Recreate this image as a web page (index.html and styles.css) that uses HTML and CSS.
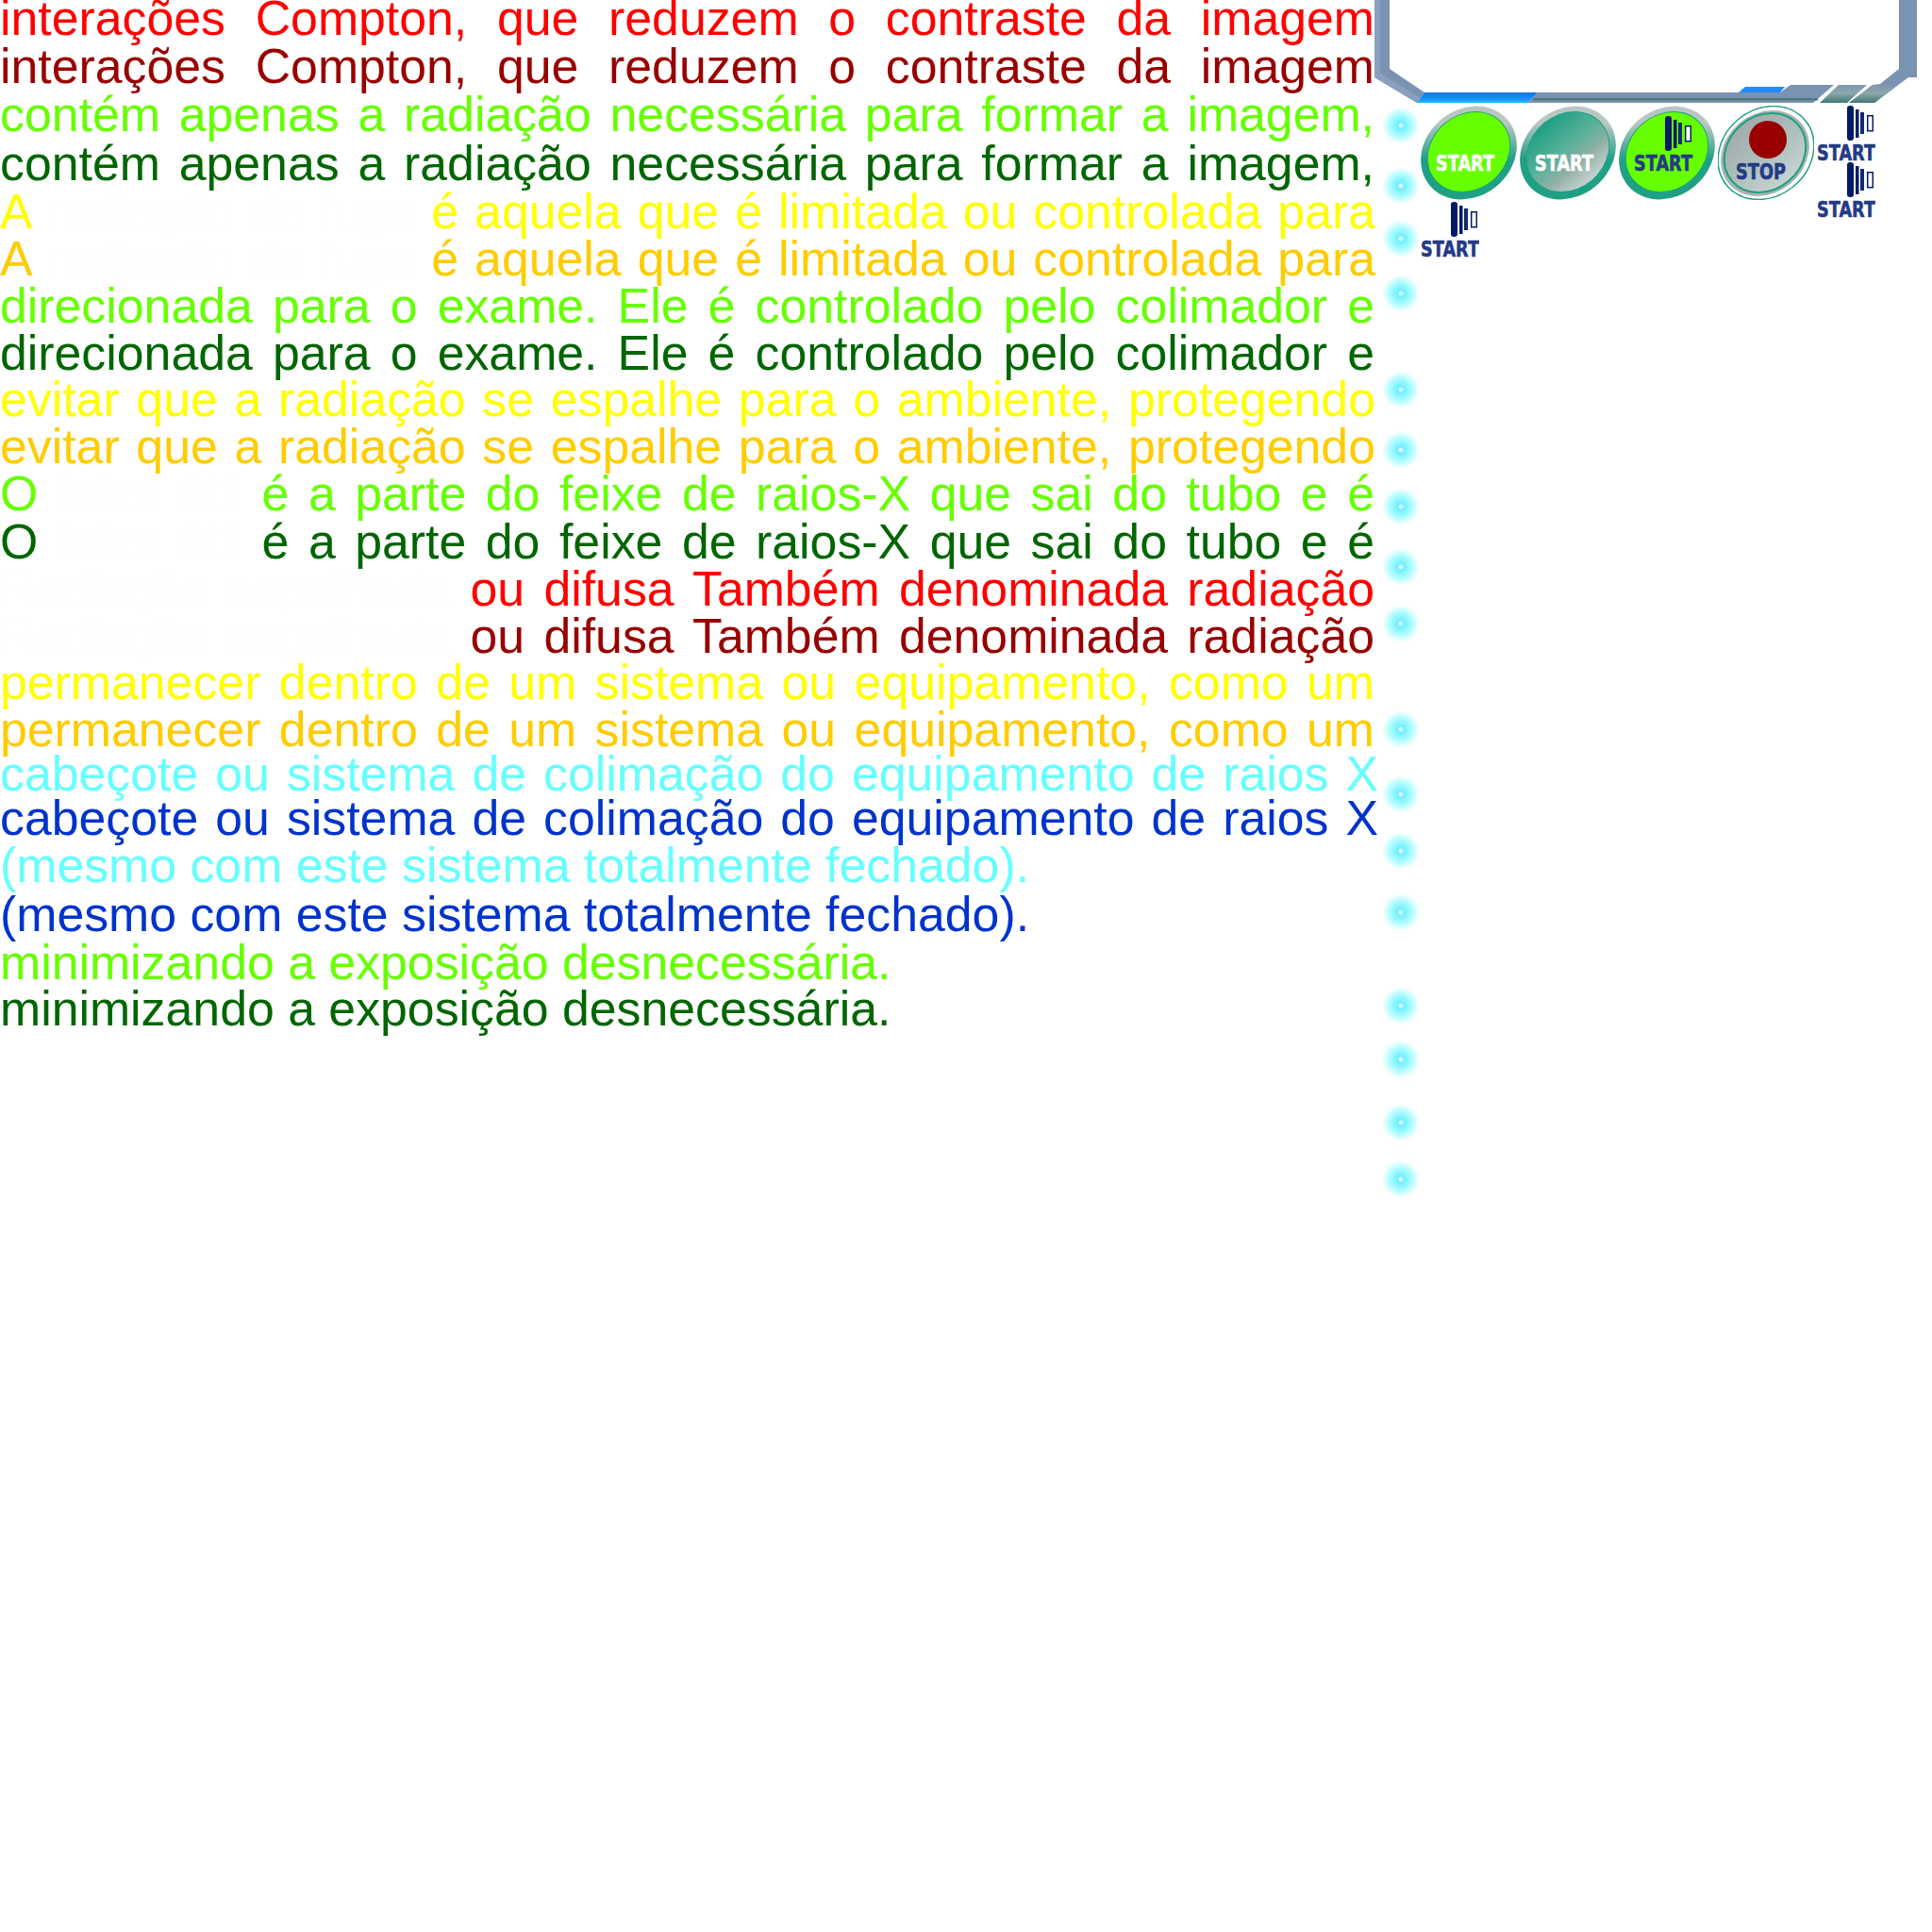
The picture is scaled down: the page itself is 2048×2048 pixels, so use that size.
FILE: index.html
```html
<!DOCTYPE html>
<html lang="pt-BR">

<head>
  <meta charset="UTF-8">
  <meta name="viewport" content="width=device-width, initial-scale=1.0">
  <title>Radiação</title>
  <link rel="stylesheet" href="styles.css">
</head>

<body>
  <!-- shared gradients and the bars icon -->
  <svg class="defs" width="0" height="0">
    <defs>
      <radialGradient id="glow">
        <stop offset="0" stop-color="#ffffff" />
        <stop offset="0.07" stop-color="#d8fdff" />
        <stop offset="0.17" stop-color="#70f0ff" />
        <stop offset="0.55" stop-color="#a8fbff" />
        <stop offset="1" stop-color="#ffffff" />
      </radialGradient>
      <linearGradient id="rim" x1="0" y1="1" x2="1" y2="0">
        <stop offset="0.45" stop-color="#1fa085" />
        <stop offset="0.72" stop-color="#b9c7c3" />
      </linearGradient>
      <linearGradient id="off" x1="0" y1="0" x2="0" y2="1">
        <stop offset="0" stop-color="#1fa085" />
        <stop offset="0.45" stop-color="#5bb199" />
        <stop offset="0.7" stop-color="#8fb0a6" />
        <stop offset="1" stop-color="#c6d2cf" />
      </linearGradient>
      <linearGradient id="stopface" x1="0" y1="0" x2="0" y2="1">
        <stop offset="0" stop-color="#a3abab" />
        <stop offset="0.5" stop-color="#abbfbb" />
        <stop offset="1" stop-color="#c8d2d2" />
      </linearGradient>
      <linearGradient id="seg" x1="0" y1="0" x2="0" y2="1">
        <stop offset="0" stop-color="#7b93b3" />
        <stop offset="0.45" stop-color="#8fa8a8" />
        <stop offset="1" stop-color="#3f7a78" />
      </linearGradient>
      <linearGradient id="strip" x1="0" y1="0" x2="0" y2="1">
        <stop offset="0" stop-color="#0f78dc" />
        <stop offset="0.6" stop-color="#1a8cff" />
        <stop offset="1" stop-color="#19c4ff" />
      </linearGradient>
      <symbol id="bars" viewBox="0 0 28 37">
        <rect x="0" y="0" width="7" height="37" rx="3" fill="#001a66" />
        <rect x="9" y="4" width="3.5" height="30" fill="#001a66" />
        <rect x="14" y="7" width="4" height="23" fill="#102a70" />
        <rect x="21.7" y="10.7" width="5.6" height="16" fill="#fff" stroke="#001a66" stroke-width="1.5" />
      </symbol>
    </defs>
  </svg>

  <main class="page">
    <div class="copy">
      <p class="line red">interações Compton, que reduzem o contraste da imagem</p>
      <p class="line dark-red up-1">interações Compton, que reduzem o contraste da imagem</p>
      <p class="line lime up-1">contém apenas a radiação necessária para formar a imagem,</p>
      <p class="line green up-2">contém apenas a radiação necessária para formar a imagem,</p>
      <p class="line yellow up-1 wide"><span>A</span> <span class="ghost">radiação de fuga</span> é aquela que é limitada ou controlada para</p>
      <p class="line orange wide"><span>A</span> <span class="ghost">radiação de fuga</span> é aquela que é limitada ou controlada para</p>
      <p class="line lime">direcionada para o exame. Ele é controlado pelo colimador e</p>
      <p class="line green">direcionada para o exame. Ele é controlado pelo colimador e</p>
      <p class="line yellow back-1 wide">evitar que a radiação se espalhe para o ambiente, protegendo</p>
      <p class="line orange wide">evitar que a radiação se espalhe para o ambiente, protegendo</p>
      <p class="line lime">O <span class="ghost">feixe útil</span> é a parte do feixe de raios-X que sai do tubo e é</p>
      <p class="line green up-1">O <span class="ghost">feixe útil</span> é a parte do feixe de raios-X que sai do tubo e é</p>
      <p class="line red"><span class="ghost">Radiação espalhada</span> ou difusa Também denominada radiação</p>
      <p class="line dark-red"><span class="ghost">Radiação espalhada</span> ou difusa Também denominada radiação</p>
      <p class="line yellow back-1">permanecer dentro de um sistema ou equipamento, como um</p>
      <p class="line orange">permanecer dentro de um sistema ou equipamento, como um</p>
      <p class="line cyan back-3 widest">cabeçote ou sistema de colimação do equipamento de raios X</p>
      <p class="line blue back-3 widest">cabeçote ou sistema de colimação do equipamento de raios X</p>
      <p class="line cyan free">(mesmo com este sistema totalmente fechado).</p>
      <p class="line blue free up-2">(mesmo com este sistema totalmente fechado).</p>
      <p class="line lime free up-1">minimizando a exposição desnecessária.</p>
      <p class="line green free back-1">minimizando a exposição desnecessária.</p>
    </div>

    <aside class="panel">
      <!-- screen frame, cut by the top of the page -->
      <svg class="frame" width="576" height="109" viewBox="0 0 576 109">
        <polygon points="0,0 16,0 16,73 53,98 45,109 0,82" fill="#7b93b3" />
        <polygon points="0,82 45,109 49,104 6,78 6,0 0,0" fill="#8aa0bd" />
        <polygon points="173,98 430,98 441,90 487,90 465,109 163,109" fill="#7b93b3" />
        <rect x="168" y="104" width="302" height="2.5" fill="#4d7a78" />
        <polygon points="53,98 173,98 163,109 45,109" fill="url(#strip)" />
        <polygon points="386,98 393,92 435,92 430,98" fill="#1a8cff" />
        <polygon points="492,90 522,90 501,109 472,109" fill="url(#seg)" />
        <polygon points="528,90 536,89 556,73 556,0 575,0 575,82 566,82 530,109 503,109" fill="#7b93b3" />
        <polygon points="528,90 555,90 530,109 503,109" fill="url(#seg)" />
      </svg>

      <div class="panel-body">
        <svg class="dots" width="48" height="1170" viewBox="0 0 48 1170">
          <circle cx="28" cy="24" r="20" />
          <circle cx="28" cy="88" r="20" />
          <circle cx="28" cy="144" r="20" />
          <circle cx="28" cy="202" r="20" />
          <circle cx="28" cy="304" r="20" />
          <circle cx="28" cy="368" r="20" />
          <circle cx="28" cy="428" r="20" />
          <circle cx="28" cy="492" r="20" />
          <circle cx="28" cy="552" r="20" />
          <circle cx="28" cy="664" r="20" />
          <circle cx="28" cy="733" r="20" />
          <circle cx="28" cy="793" r="20" />
          <circle cx="28" cy="858" r="20" />
          <circle cx="28" cy="957" r="20" />
          <circle cx="28" cy="1014" r="20" />
          <circle cx="28" cy="1081" r="20" />
          <circle cx="28" cy="1141" r="20" />
        </svg>

        <div class="controls">
          <svg class="button" width="102" height="100" viewBox="0 0 102 100">
            <ellipse cx="51" cy="50" rx="54" ry="46" transform="rotate(-40 51 50)" fill="url(#rim)" />
            <ellipse cx="51" cy="49" rx="47" ry="40" transform="rotate(-40 51 49)" fill="#1fa085" />
            <ellipse cx="51" cy="49" rx="46" ry="39" transform="rotate(-40 51 49)" fill="#66ff00" />
            <text class="label white" x="16" y="69" textLength="62" lengthAdjust="spacingAndGlyphs">START</text>
          </svg>

          <svg class="button" width="102" height="100" viewBox="0 0 102 100">
            <ellipse cx="51" cy="50" rx="54" ry="46" transform="rotate(-40 51 50)" fill="url(#rim)" />
            <ellipse cx="51" cy="49" rx="47" ry="40" transform="rotate(-40 51 49)" fill="#1fa085" />
            <ellipse cx="51" cy="49" rx="46" ry="39" transform="rotate(-40 51 49)" fill="url(#off)" />
            <text class="label white" x="16" y="69" textLength="62" lengthAdjust="spacingAndGlyphs">START</text>
          </svg>

          <svg class="button" width="102" height="100" viewBox="0 0 102 100">
            <ellipse cx="51" cy="50" rx="54" ry="46" transform="rotate(-40 51 50)" fill="url(#rim)" />
            <ellipse cx="51" cy="49" rx="47" ry="40" transform="rotate(-40 51 49)" fill="#1fa085" />
            <ellipse cx="51" cy="49" rx="46" ry="39" transform="rotate(-40 51 49)" fill="#66ff00" />
            <use href="#bars" x="49" y="11" width="28" height="37" />
            <text class="label navy" x="16" y="69" textLength="62" lengthAdjust="spacingAndGlyphs">START</text>
          </svg>

          <svg class="button" width="102" height="100" viewBox="0 0 102 100">
            <ellipse cx="51" cy="50" rx="54" ry="46" transform="rotate(-40 51 50)" fill="#fff" stroke="#1fa085" stroke-width="1.5" />
            <ellipse cx="50" cy="50.5" rx="50" ry="42" transform="rotate(-40 50 50.5)" fill="#a9b4b2" />
            <ellipse cx="50" cy="50" rx="46" ry="39" transform="rotate(-40 50 50)" fill="url(#stopface)" stroke="#1fa085" stroke-width="2" />
            <circle cx="53" cy="36" r="20" fill="#990000" />
            <text class="label navy" x="19" y="78" textLength="53" lengthAdjust="spacingAndGlyphs">STOP</text>
          </svg>

          <div class="tags">
            <svg class="tag" width="62" height="60" viewBox="0 0 62 60">
              <use href="#bars" x="32" y="0" width="28" height="37" />
              <text class="label navy" x="0" y="58" textLength="62" lengthAdjust="spacingAndGlyphs">START</text>
            </svg>
            <svg class="tag" width="62" height="60" viewBox="0 0 62 60">
              <use href="#bars" x="32" y="0" width="28" height="37" />
              <text class="label navy" x="0" y="58" textLength="62" lengthAdjust="spacingAndGlyphs">START</text>
            </svg>
          </div>

          <svg class="tag" width="62" height="60" viewBox="0 0 62 60">
            <use href="#bars" x="32" y="0" width="28" height="37" />
            <text class="label navy" x="0" y="58" textLength="62" lengthAdjust="spacingAndGlyphs">START</text>
          </svg>
        </div>
      </div>
    </aside>
  </main>
</body>

</html>
```

FILE: styles.css
```css
* {
  box-sizing: border-box;
  margin: 0;
  padding: 0;
}

body {
  background: #fff;
  font-family: "Liberation Sans", Arial, sans-serif;
}

.defs {
  display: block;
  height: 0;
}

.page {
  display: flex;
  align-items: flex-start;
}

/* text column */
.copy {
  flex: none;
  width: 1462px;
  margin-top: -6px;
}

.line {
  width: 1457px;
  font-size: 51.8px;
  line-height: 50px;
  white-space: nowrap;
  text-align: justify;
  text-align-last: justify;
}

/* the rows are not evenly spaced */
.line.up-1 { margin-top: 1px; }
.line.up-2 { margin-top: 2px; }
.line.back-1 { margin-top: -1px; }
.line.back-3 { margin-top: -3px; }

.line.wide {
  width: 1458px;
}

.line.widest {
  width: 1461px;
}

.line.free {
  text-align: left;
  text-align-last: left;
}

.ghost {
  color: #fefefe;
}

.red { color: #ff0000; }
.dark-red { color: #990000; }
.lime { color: #66ff00; }
.green { color: #006600; }
.yellow { color: #ffff00; }
.orange { color: #ffcc00; }
.cyan { color: #66ffff; }
.blue { color: #0033cc; }

/* machine panel */
.panel {
  flex: none;
  width: 576px;
  margin-left: -5px;
}

.frame {
  display: block;
}

.panel-body {
  display: flex;
  align-items: flex-start;
}

.dots {
  flex: none;
  display: block;
}

.dots circle {
  fill: url(#glow);
}

.controls {
  display: grid;
  grid-template-columns: repeat(4, 102px) 62px;
  column-gap: 3px;
  row-gap: 2px;
  margin-top: 3px;
  margin-left: 1px;
}

.button,
.tag {
  display: block;
}

.tags {
  grid-row: span 2;
}

.label {
  font-family: "DejaVu Sans", sans-serif;
  font-size: 23px;
  font-weight: 700;
  stroke-width: 0.6px;
}

.white {
  fill: #fff;
  stroke: #fff;
}

.navy {
  fill: #233a86;
  stroke: #233a86;
}
```
